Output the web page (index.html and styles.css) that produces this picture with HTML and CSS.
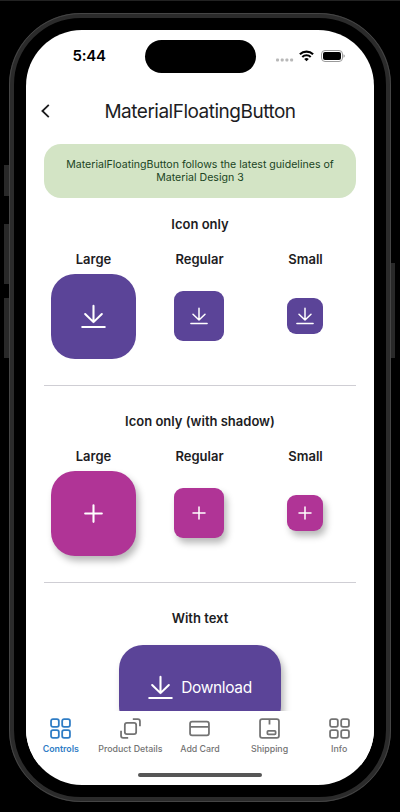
FILE: index.html
```html
<!DOCTYPE html>
<html lang="en">
<head>
<meta charset="utf-8">
<title>MaterialFloatingButton</title>
<link rel="stylesheet" href="styles.css">
</head>
<body>
<svg width="0" height="0" class="defs">
  <symbol id="download" viewBox="0 0 24 24"><path d="M12 1.8v15.4M4 9.6 12 17.4l8-7.8M1.2 22h21.6"/></symbol>
  <symbol id="plus" viewBox="0 0 24 24"><path d="M12 4v16M4 12h16"/></symbol>
  <symbol id="grid" viewBox="0 0 20 20"><rect x="1" y="1" width="7.4" height="7.4" rx="1.8"/><rect x="11.6" y="1" width="7.4" height="7.4" rx="1.8"/><rect x="1" y="11.6" width="7.4" height="7.4" rx="1.8"/><rect x="11.6" y="11.6" width="7.4" height="7.4" rx="1.8"/></symbol>
</svg>
<div class="phone">
  <i class="key mute"></i><i class="key up"></i><i class="key down"></i><i class="key power"></i>
  <div class="screen">
    <div class="status">
      <span class="time">5:44</span>
      <span class="island"></span>
      <span class="signals">
        <svg width="18" height="4" viewBox="0 0 18 4" fill="#b8b8b8"><rect x="0" y=".5" width="3" height="3" rx="1"/><rect x="4.7" y=".5" width="3" height="3" rx="1"/><rect x="9.4" y=".5" width="3" height="3" rx="1"/><rect x="14.1" y=".5" width="3" height="3" rx="1"/></svg>
        <svg class="wifi" width="15" height="12" viewBox="0 0 15 12" fill="none" stroke="#000" stroke-width="2.1"><path d="M.9 4.3a9.5 9.5 0 0 1 13.2 0M3.3 7a6 6 0 0 1 8.4 0"/><path d="M7.5 11.3 5.2 9a3.3 3.3 0 0 1 4.6 0z" fill="#000" stroke="none"/></svg>
        <svg width="24" height="12" viewBox="0 0 24 12"><rect x=".5" y=".5" width="21" height="11" rx="3.5" fill="none" stroke="#9a9a9a"/><rect x="2" y="2" width="18" height="8" rx="2" fill="#000"/><path d="M22.6 4.2v3.6q1-.5 1-1.8t-1-1.8" fill="#777"/></svg>
      </span>
    </div>
    <header class="header">
      <svg class="back" width="9" height="14" viewBox="0 0 9 14"><path d="M7.8 .8 1.4 7l6.4 6.2"/></svg>
      <h1>MaterialFloatingButton</h1>
    </header>
    <main>
      <p class="banner">MaterialFloatingButton follows the latest guidelines of Material Design 3</p>
      <section>
        <h2>Icon only</h2>
        <div class="sizes">
          <div class="cell"><h3>Large</h3><div class="slot"><button class="fab large"><svg><use href="#download"/></svg></button></div></div>
          <div class="cell"><h3>Regular</h3><div class="slot"><button class="fab regular"><svg><use href="#download"/></svg></button></div></div>
          <div class="cell"><h3>Small</h3><div class="slot"><button class="fab small"><svg><use href="#download"/></svg></button></div></div>
        </div>
      </section>
      <section>
        <h2>Icon only (with shadow)</h2>
        <div class="sizes">
          <div class="cell"><h3>Large</h3><div class="slot"><button class="fab large pink"><svg><use href="#plus"/></svg></button></div></div>
          <div class="cell"><h3>Regular</h3><div class="slot"><button class="fab regular pink"><svg><use href="#plus"/></svg></button></div></div>
          <div class="cell"><h3>Small</h3><div class="slot"><button class="fab small pink"><svg><use href="#plus"/></svg></button></div></div>
        </div>
      </section>
      <section class="last">
        <h2>With text</h2>
        <button class="fab extended"><svg><use href="#download"/></svg><span>Download</span></button>
      </section>
    </main>
    <nav class="tabs">
      <a class="tab active"><svg viewBox="0 0 20 20"><use href="#grid"/></svg><span>Controls</span></a>
      <a class="tab"><svg viewBox="0 0 20 20"><rect x="4.6" y="4.6" width="10.8" height="10.8" rx="2"/><path d="M12.2 1H17a2 2 0 0 1 2 2v4.8M7.8 19H3a2 2 0 0 1-2-2v-4.8"/></svg><span>Product Details</span></a>
      <a class="tab"><svg viewBox="0 0 20 20"><rect x="1" y="3.4" width="18" height="13.2" rx="2"/><path d="M1 8.4h18"/></svg><span>Add Card</span></a>
      <a class="tab"><svg viewBox="0 0 20 20"><rect x="1" y="1" width="18" height="18" rx="2"/><path d="M10 1v5.2"/><rect x="8" y="12.2" width="7.8" height="3.4" rx=".8"/></svg><span>Shipping</span></a>
      <a class="tab"><svg viewBox="0 0 20 20"><use href="#grid"/></svg><span>Info</span></a>
    </nav>
    <div class="home"></div>
  </div>
</div>
</body>
</html>
```
FILE: styles.css
```css
* { box-sizing: border-box; }
body {
  margin: 0;
  height: 812px;
  padding: 13px 9px 0;
  overflow: hidden;
  background: linear-gradient(#222 0 1px, #000 1px);
  font-family: Inter, "Liberation Sans", sans-serif;
  color: #1d1d1f;
}
.defs { position: absolute; }
h1, h2, h3, p { margin: 0; }
h1, h2, h3 { white-space: nowrap; }
.phone {
  position: relative;
  width: 382px;
  height: 789px;
  padding: 12px;
  border: 5px solid #2b2b2b;
  border-radius: 72px;
  background: #000;
  outline: 1px solid #454545;
  outline-offset: -1px;
}
.key { position: absolute; width: 5px; background: #292929; }
.mute { left: -10px; top: 147px; height: 31px; }
.up { left: -10px; top: 206px; height: 60px; }
.down { left: -10px; top: 280px; height: 60px; }
.power { right: -9px; top: 245px; height: 95px; width: 4px; }
.screen {
  display: flex;
  flex-direction: column;
  width: 348px;
  height: 755px;
  overflow: hidden;
  border-radius: 56px;
  background: #fff;
}
.status {
  display: grid;
  grid-template-columns: 118.5px 111px 1fr;
  height: 58px;
  padding-top: 10px;
}
.time {
  padding: 6px 0 0 46.5px;
  font-size: 15px;
  line-height: 20px;
  font-weight: 600;
  letter-spacing: -.2px;
  color: #000;
}
.island { height: 32.5px; border-radius: 17px; background: #000; }
.signals { display: flex; align-items: center; height: 31px; padding-left: 20px; }
.signals svg:first-child { margin-top: 8px; }
.wifi { margin: 0 7px 0 5.5px; }
.header {
  display: grid;
  grid-template-columns: 40px 1fr 40px;
  align-items: center;
  height: 46px;
}
.back { margin-left: 15px; fill: none; stroke: #1d1d1f; stroke-width: 1.8; }
h1 { padding-top: 1px; text-align: center; font-size: 19px; font-weight: 400; letter-spacing: -.5px; line-height: 26px; }
main { flex: 1; min-height: 0; overflow: hidden; padding: 10px 18px 0; }
.banner {
  height: 54px;
  padding: 15px 14px 0;
  border-radius: 17px;
  background: #d3e4c5;
  color: #20451f;
  text-align: center;
  font-size: 10.6px;
  line-height: 12.5px;
}
section { height: 197px; padding-top: 8px; border-bottom: 1.5px solid #cfced4; }
section:first-of-type { height: 188px; padding-top: 16px; }
section:nth-of-type(2) { padding-top: 25px; }
.last { border: 0; padding-top: 25px; text-align: center; }
h2, h3 { text-align: center; font-size: 13px; line-height: 20px; font-weight: 600; }
.sizes { display: grid; grid-template-columns: repeat(3, 106px); margin: 15px -4px 0 -3.5px; }
.slot { display: flex; align-items: center; justify-content: center; height: 85px; margin-top: 5px; }
.fab {
  display: flex;
  align-items: center;
  justify-content: center;
  padding: 0;
  border: 0;
  background: #5b4498;
  color: #fff;
  font-family: inherit;
}
.fab svg { width: 18px; height: 18px; fill: none; stroke: #fff; stroke-width: 2; stroke-linecap: round; stroke-linejoin: round; }
.large { width: 85px; height: 85px; border-radius: 24px; }
.large svg { width: 25px; height: 25px; }
.regular { width: 50px; height: 50px; margin: 0 1px 1px 0; border-radius: 9px; }
.small { width: 36px; height: 36px; margin: 0 1px 1px 0; border-radius: 9px; }
.pink { background: #b03496; box-shadow: 3px 5px 7px rgba(0, 0, 0, .28); }
.extended {
  width: 162px;
  height: 85px;
  margin: 17px auto 0;
  gap: 8px;
  border-radius: 24px;
  box-shadow: 3px 5px 7px rgba(0, 0, 0, .28);
  font-size: 15.5px;
  letter-spacing: -.35px;
}
.extended svg { width: 25px; height: 25px; }
.tabs { display: flex; height: 54px; padding-top: 7px; background: #fff; }
.tab { display: flex; flex: 1 0 0; min-width: 0; flex-direction: column; align-items: center; color: #737373; font-size: 8.8px; line-height: 12px; font-weight: 500; white-space: nowrap; }
.tab svg { width: 21px; height: 21px; margin-bottom: 4px; fill: none; stroke: currentColor; stroke-width: 1.7; }
.active { color: #2f7dc5; font-weight: 600; }
.home { width: 124px; height: 4px; margin: 8px auto 8px; border-radius: 2px; background: #565656; }
```
